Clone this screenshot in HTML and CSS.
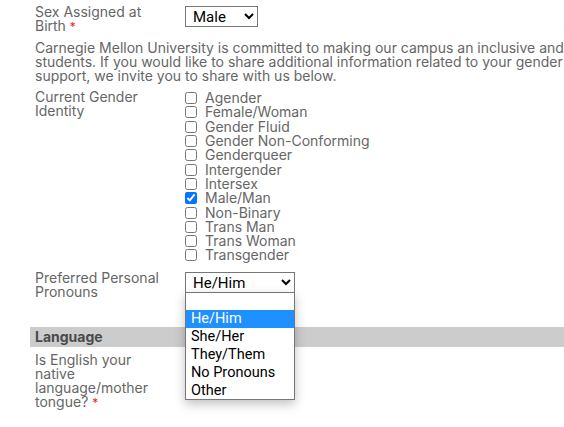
FILE: index.html
```html
<!DOCTYPE html>
<html>
<head>
<meta charset="utf-8">
<link rel="stylesheet" href="styles.css">
</head>
<body>
<div class="page">
  <div class="row row-sex">
    <div class="label">Sex Assigned at Birth <span class="req">*</span></div>
    <div class="control">
      <select class="sel sel-sex"><option>Male</option></select>
    </div>
  </div>
  <p class="intro">Carnegie Mellon University is committed to making our campus an inclusive and welcoming environment for all<br>students. If you would like to share additional information related to your gender identity or would like additional<br>support, we invite you to share with us below.</p>
  <div class="row">
    <div class="label">Current Gender Identity</div>
    <div class="control checks">
      <label class="check"><input type="checkbox"><span>Agender</span></label>
      <label class="check"><input type="checkbox"><span>Female/Woman</span></label>
      <label class="check"><input type="checkbox"><span>Gender Fluid</span></label>
      <label class="check"><input type="checkbox"><span>Gender Non-Conforming</span></label>
      <label class="check"><input type="checkbox"><span>Genderqueer</span></label>
      <label class="check"><input type="checkbox"><span>Intergender</span></label>
      <label class="check"><input type="checkbox"><span>Intersex</span></label>
      <label class="check"><input type="checkbox" checked><span>Male/Man</span></label>
      <label class="check"><input type="checkbox"><span>Non-Binary</span></label>
      <label class="check"><input type="checkbox"><span>Trans Man</span></label>
      <label class="check"><input type="checkbox"><span>Trans Woman</span></label>
      <label class="check"><input type="checkbox"><span>Transgender</span></label>
    </div>
  </div>
  <div class="row">
    <div class="label">Preferred Personal Pronouns</div>
    <div class="control dd">
      <select class="sel sel-pron"><option>He/Him</option></select>
      <div class="listbox">
        <div class="opt">&nbsp;</div>
        <div class="opt active">He/Him</div>
        <div class="opt">She/Her</div>
        <div class="opt">They/Them</div>
        <div class="opt">No Pronouns</div>
        <div class="opt">Other</div>
      </div>
    </div>
  </div>
  <div class="section">Language</div>
  <div class="row">
    <div class="label">Is English your native language/mother tongue? <span class="req">*</span></div>
    <div class="control"></div>
  </div>
</div>
</body>
</html>
```

FILE: styles.css
```css
html {
  overflow: hidden;
}
html, body {
  margin: 0;
  padding: 0;
  background: #fff;
}
body {
  font-family: Inter, Roboto, "Liberation Sans", sans-serif;
  font-size: 14px;
  line-height: 14px;
  color: #666;
  min-height: 440px;
}
.page {
  width: 900px;
  padding: 5px 0 0 30px;
}
.row {
  display: flex;
  padding-left: 5px;
  margin-bottom: 8px;
}
.row-sex {
  margin-bottom: 7px;
}
.label {
  width: 135px;
  padding-right: 15px;
  flex: none;
}
.req {
  color: #e8262d;
  font-size: 12px;
}
.control {
  flex: 1;
}
.sel {
  font-family: Roboto, "Liberation Sans", sans-serif;
  font-size: 15px;
  color: #000;
  background: #fff;
  border: 1px solid #767676;
  border-radius: 0;
  height: 21px;
  padding: 0 0 0 3px;
  margin: 1px 0 0;
}
.sel-sex { width: 73px; }
.sel-pron { width: 110px; }
.intro {
  margin: 0 0 7px;
  padding-left: 5px;
  white-space: nowrap;
}
.checks {
  display: flex;
  flex-direction: column;
  padding-top: 1px;
}
.check {
  display: flex;
  align-items: center;
  height: 14.3px;
}
.check input {
  width: 12px;
  height: 12px;
  margin: 0 8px 0 0;
}
.dd {
  position: relative;
}
.listbox {
  position: absolute;
  left: 0;
  top: 21px;
  width: 108px;
  border: 1px solid #767676;
  background: #fff;
  box-shadow: 0 4px 10px rgba(0,0,0,0.25);
  z-index: 2;
  font-family: Roboto, "Liberation Sans", sans-serif;
}
.opt {
  height: 17.8px;
  line-height: 17.8px;
  padding-left: 5px;
  color: #000;
  font-size: 14.5px;
}
.opt.active {
  background: #1e90ff;
  color: #fff;
}
.section {
  margin-top: 28px;
  background: #cccccc;
  height: 20px;
  line-height: 20px;
  padding-left: 5px;
  font-weight: bold;
  color: #4a4a4a;
  margin-bottom: 6px;
}
```
